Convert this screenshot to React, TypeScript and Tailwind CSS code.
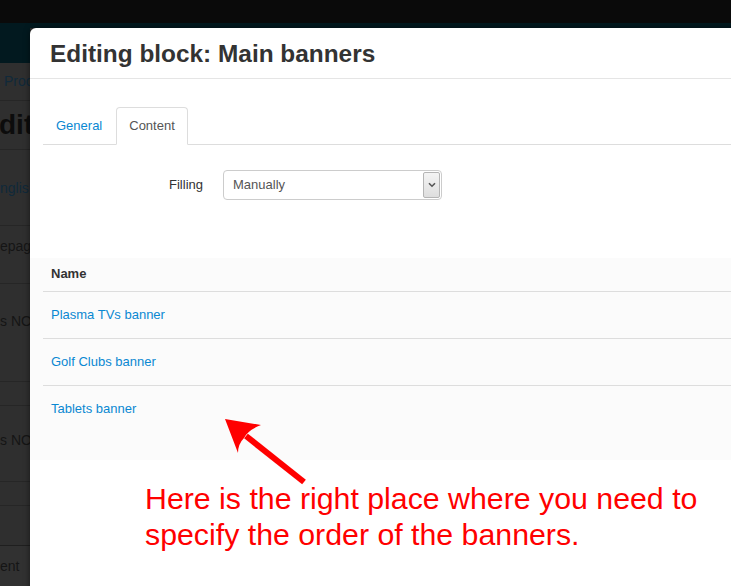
import React from "react";

const font = { fontFamily: '"Liberation Sans", Arial, sans-serif' };

function BackgroundStrip() {
  return (
    <div className="flex flex-col w-[30px] overflow-hidden text-[14px]">
      <div className="h-[35px] bg-[#02191f]" />
      <div className="h-[38px] flex items-center pl-[4px] whitespace-nowrap text-[#10293a] border-b border-[#262626] overflow-hidden">
        Prod
      </div>
      <div className="h-[49px] flex items-center whitespace-nowrap text-[28px] font-bold text-[#0c0c0c] border-b border-[#262626] overflow-hidden">
        <span className="ml-[-1px]">diti</span>
      </div>
      <div className="h-[76px] flex items-center whitespace-nowrap text-[#10293a] border-b border-[#262626] overflow-hidden">
        <span className="mt-[2px]">nglish</span>
      </div>
      <div className="h-[58px] flex items-start pt-[10px] whitespace-nowrap text-[#151515] border-b border-[#262626] overflow-hidden">
        <span>epage</span>
      </div>
      <div className="h-[98px] flex items-start pt-[27px] whitespace-nowrap text-[#151515] border-b border-[#262626] overflow-hidden">
        <span>s NOT</span>
      </div>
      <div className="h-[24px] border-b border-[#262626]" />
      <div className="h-[76px] flex items-center whitespace-nowrap text-[#151515] border-b border-[#262626] overflow-hidden">
        <span className="mt-[-6px]">s NOT</span>
      </div>
      <div className="h-[24px] border-b border-[#262626]" />
      <div className="h-[40px] border-b border-[#1f1f1f]" />
      <div className="h-[40px] bg-[#313131] flex items-center whitespace-nowrap text-[#151515] overflow-hidden">
        <span>ent</span>
      </div>
    </div>
  );
}

function Chevron() {
  return (
    <svg width="8" height="6" viewBox="0 0 8 6">
      <path d="M1 1.2 L4 4.2 L7 1.2" fill="none" stroke="#555" strokeWidth="1.6" />
    </svg>
  );
}

function Modal() {
  const link = "text-[#0a88d2]";
  return (
    <div className="absolute left-[30px] top-[28px] w-[720px] h-[580px] bg-white rounded-tl-[6px] shadow-[0_0_6px_rgba(0,0,0,0.5)] flex flex-col">
      <div className="h-[51px] border-b border-[#e5e5e5] pl-[20px] pt-[13px]">
        <h1 className="text-[24.4px] leading-[26px] font-bold text-[#333] whitespace-nowrap">Editing block: Main banners</h1>
      </div>
      <div className="pt-[28px] pl-[13px]">
        <ul className="flex border-b border-[#ddd] text-[13px]">
          <li className="-mb-px mr-[1px]">
            <span className={`block border border-transparent rounded-t-[4px] px-[12px] py-[8px] leading-[20px] ${link}`}>General</span>
          </li>
          <li className="-mb-px">
            <span className="block border border-[#ddd] border-b-white bg-white rounded-t-[4px] px-[12px] py-[8px] leading-[20px] text-[#555]">Content</span>
          </li>
        </ul>
        <div className="flex items-center mt-[25px] text-[13px]">
          <label className="w-[180px] pr-[20px] text-right text-[#333]">Filling</label>
          <div className="w-[219px] h-[30px] border border-[#ccc] rounded-[4px] flex items-center justify-between pl-[9px] pr-[1px] text-[#555]">
            <span>Manually</span>
            <div className="w-[17px] h-[26px] bg-[linear-gradient(#f4f4f4,#dedede)] border border-[#b5b5b5] rounded-[2px] flex items-center justify-center">
              <Chevron />
            </div>
          </div>
        </div>
      </div>
      <div className="mt-[58px] bg-[#fbfbfb] pb-[28px] text-[13px]">
        <div className="ml-[13px]">
          <div className="border-b border-[#ddd] pl-[8px] pt-[7px] pb-[9px] leading-[17px] font-bold text-[#333]">Name</div>
          <div className={`border-b border-[#ddd] pl-[8px] py-[14px] leading-[18px] ${link}`}>Plasma TVs banner</div>
          <div className={`border-b border-[#ddd] pl-[8px] py-[14px] leading-[18px] ${link}`}>Golf Clubs banner</div>
          <div className={`pl-[8px] py-[14px] leading-[18px] ${link}`}>Tablets banner</div>
        </div>
      </div>
    </div>
  );
}

export default function App() {
  return (
    <div className="relative w-[731px] h-[586px] overflow-hidden bg-[#2f2f2f]" style={font}>
      <div className="h-[23px] bg-[#0a0a0a]" />
      <div className="h-[5px] bg-[#02191f]" />
      <BackgroundStrip />
      <Modal />
      <svg className="absolute left-0 top-0" width="731" height="586" viewBox="0 0 731 586">
        <line x1="304" y1="482" x2="246" y2="436" stroke="#ff0000" strokeWidth="6" />
        <path d="M225 419 L261 425 Q248 430 244 438 Q238 444 238 453 Z" fill="#ff0000" />
      </svg>
      <div className="absolute left-[145px] top-[481px] text-[30.3px] leading-[36px] text-[#ff0000] whitespace-nowrap">
        <div>Here is the right place where you need to</div>
        <div>specify the order of the banners.</div>
      </div>
    </div>
  );
}
